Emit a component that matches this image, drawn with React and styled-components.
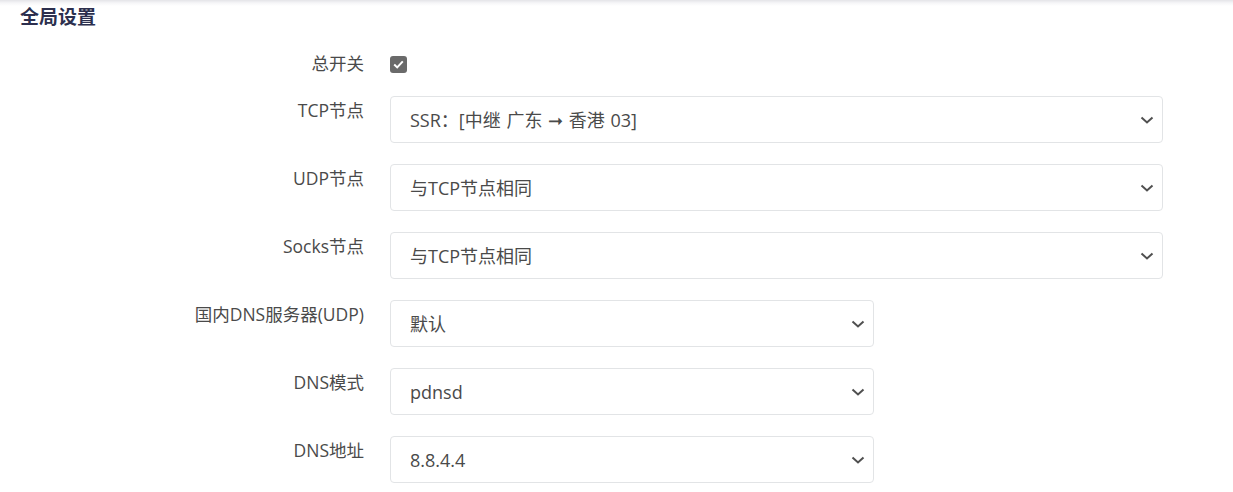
import React from "react";
import styled, { createGlobalStyle } from "styled-components";

const Global = createGlobalStyle`
  html, body { margin: 0; padding: 0; background: #fff; }
  body { font-family: "Open Sans", "Noto Sans CJK SC", sans-serif; }
`;

const Page = styled.div`
  width: 1233px;
  height: 492px;
  overflow: hidden;
  background: linear-gradient(to bottom, #e4e4e8 0px, #f6f6f8 3px, #ffffff 6px);
`;

const Title = styled.h3`
  margin: 0;
  padding: 3px 0 0 20px;
  font-size: 19px;
  line-height: 26px;
  font-weight: 700;
  color: #2c2f4e;
  font-family: "Noto Sans CJK SC", sans-serif;
`;

const Form = styled.div`
  display: flex;
  flex-direction: column;
  gap: 21px;
  padding-top: 22px;
`;

const Row = styled.div`
  display: grid;
  grid-template-columns: 364px 1fr;
  column-gap: 26px;
  align-items: ${(p) => (p.$center ? "center" : "start")};
`;

const Label = styled.label`
  text-align: right;
  font-size: 17.5px;
  line-height: 24px;
  color: #4a4a4a;
  padding-top: ${(p) => (p.$center ? "0" : "2px")};
`;

const Check = styled.span`
  display: inline-flex;
  align-items: center;
  justify-content: center;
  width: 17px;
  height: 17px;
  border-radius: 3px;
  background: #6a6a6a;
  margin-top: 2px;
`;

const SelectWrap = styled.div`
  position: relative;
  width: ${(p) => (p.$wide ? "773px" : "484px")};
`;

const Select = styled.select`
  appearance: none;
  -webkit-appearance: none;
  width: 100%;
  height: 47px;
  box-sizing: border-box;
  border: 1px solid #e2e4e6;
  border-radius: 4px;
  background: #fff;
  padding: 0 40px 0 19px;
  font-family: "Open Sans", "Noto Sans CJK SC", sans-serif;
  font-size: 18px;
  word-spacing: 1px;
  color: #4a4a4a;
  outline: none;
`;

const Chevron = styled.svg`
  position: absolute;
  right: 9px;
  top: 50%;
  transform: translateY(-50%);
  pointer-events: none;
`;

function Field({ label, value, wide }) {
  return (
    <Row>
      <Label>{label}</Label>
      <SelectWrap $wide={wide}>
        <Select defaultValue={value}>
          <option value={value}>{value}</option>
        </Select>
        <Chevron width="14" height="10" viewBox="0 0 14 10">
          <path d="M1.5 2.5 L7 7.5 L12.5 2.5" fill="none" stroke="#505050" strokeWidth="2" />
        </Chevron>
      </SelectWrap>
    </Row>
  );
}

export default function App() {
  return (
    <>
      <Global />
      <Page>
        <Title>全局设置</Title>
        <Form>
          <Row $center>
            <Label $center>总开关</Label>
            <div>
              <Check>
                <svg width="11" height="9" viewBox="0 0 11 9">
                  <path d="M1.2 4.6 L4.2 7.4 L9.8 1.4" fill="none" stroke="#fff" strokeWidth="2" />
                </svg>
              </Check>
            </div>
          </Row>
          <Field label="TCP节点" value="SSR：[中继 广东 ➞ 香港 03]" wide />
          <Field label="UDP节点" value="与TCP节点相同" wide />
          <Field label="Socks节点" value="与TCP节点相同" wide />
          <Field label="国内DNS服务器(UDP)" value="默认" />
          <Field label="DNS模式" value="pdnsd" />
          <Field label="DNS地址" value="8.8.4.4" />
        </Form>
      </Page>
    </>
  );
}
